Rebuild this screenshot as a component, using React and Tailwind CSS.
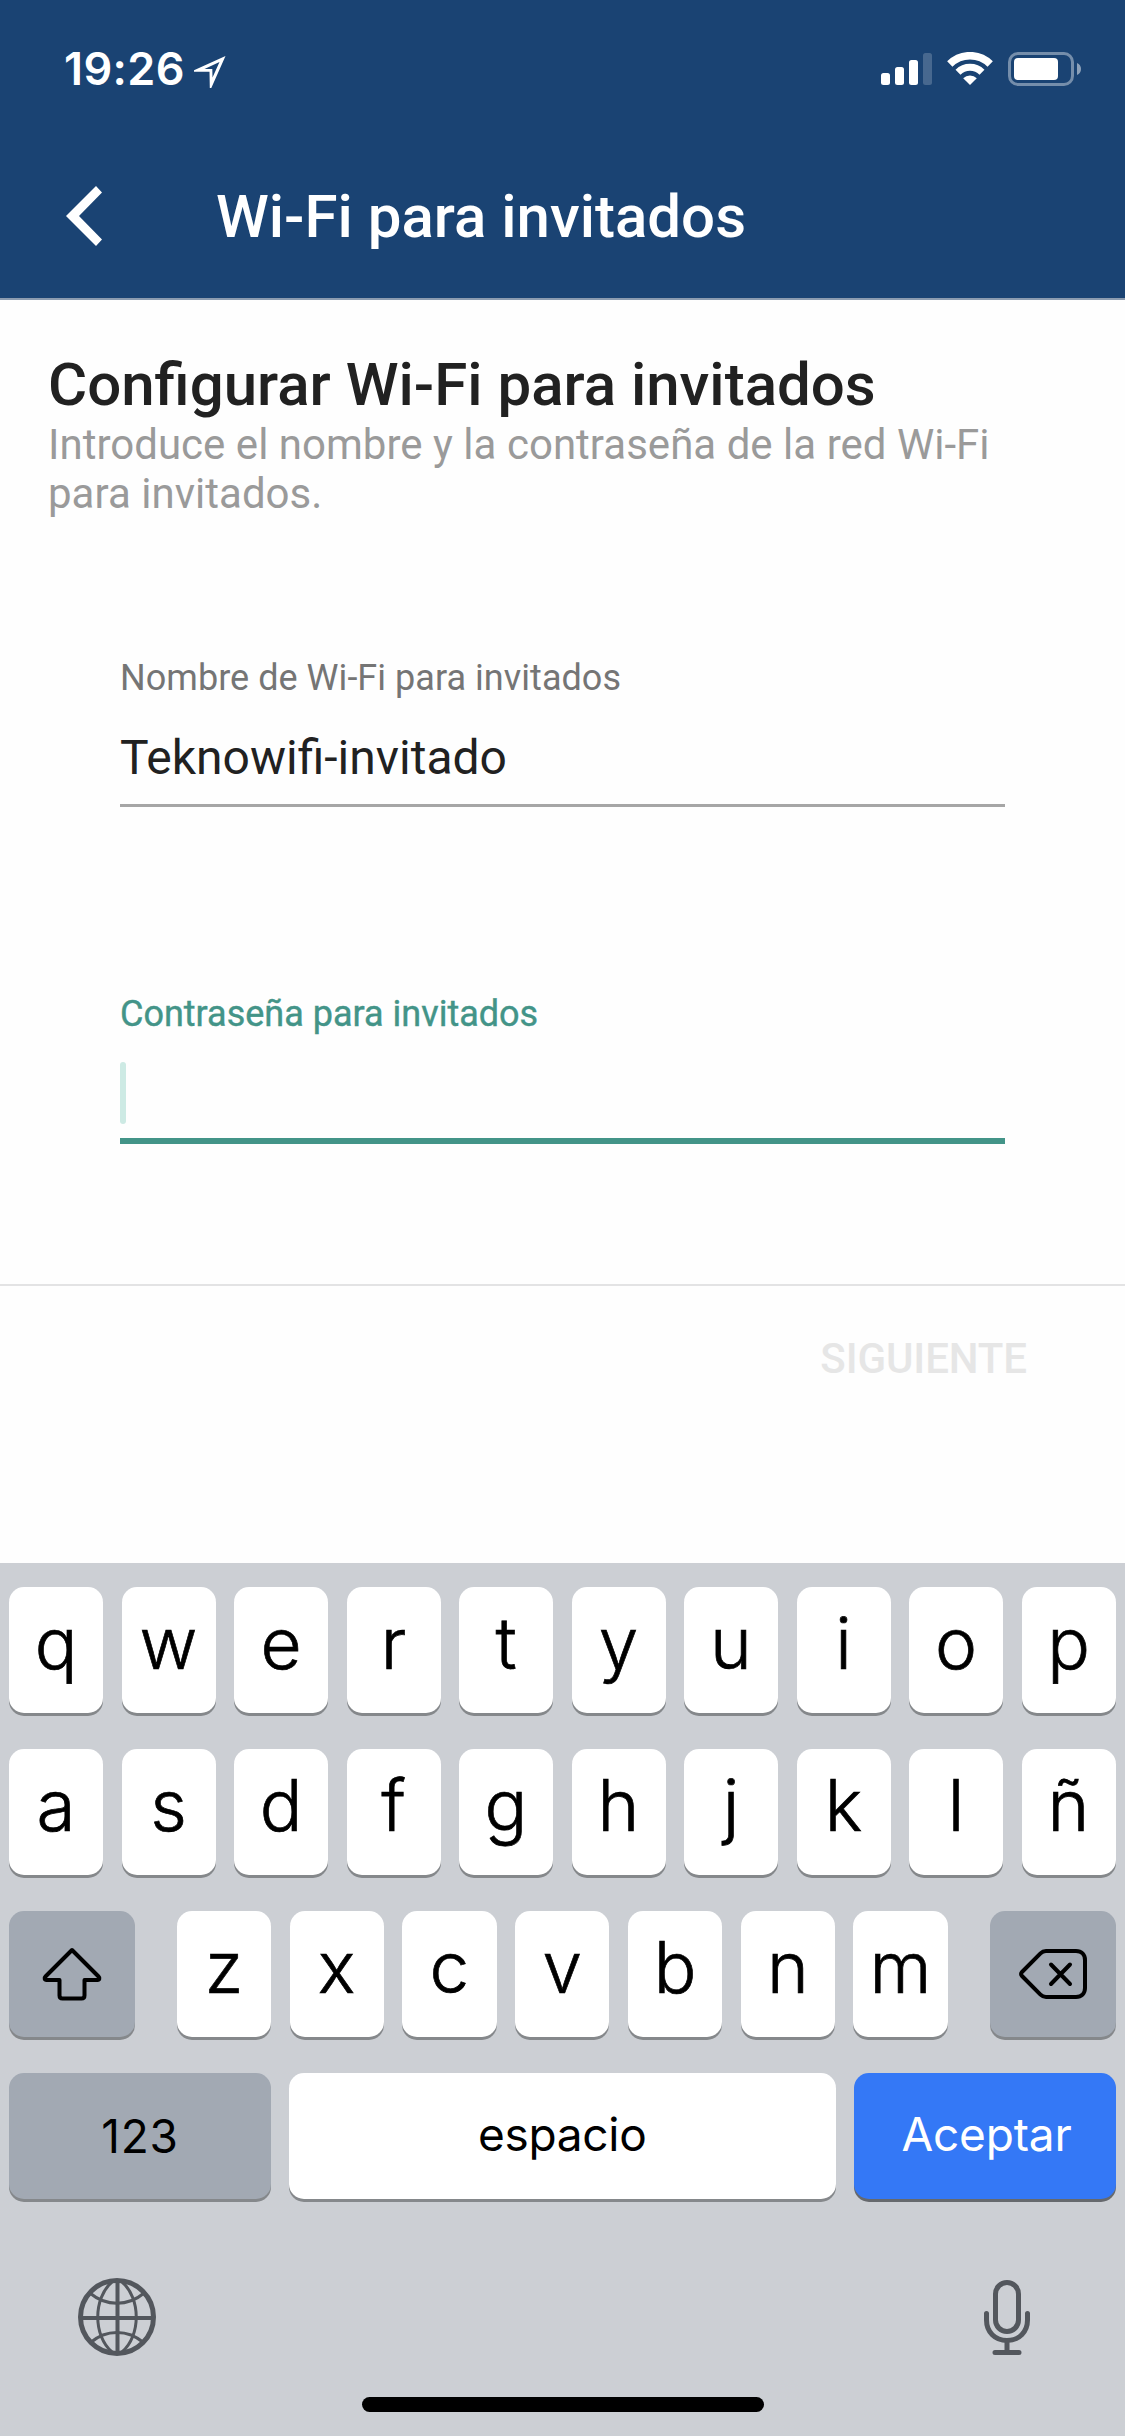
const rows = {
	first: ["q", "w", "e", "r", "t", "y", "u", "i", "o", "p"],
	second: ["a", "s", "d", "f", "g", "h", "j", "k", "l", "ñ"],
	third: ["z", "x", "c", "v", "b", "n", "m"],
};

const StatusBar = () => (
	<div className="h-[132px] flex items-start justify-between pl-16 pr-[44px] text-white">
		<div className="flex items-start">
			<p className={styles.time}>19:26</p>
			<svg className="mt-[56px]" width="32" height="33" viewBox="0 0 32 33" fill="currentColor" fillRule="evenodd">
				<path d="M31.500 0L0 14.200V15.800H15.500L15.800 32H17.300ZM25.500 6L18.500 21.500L18.300 12.900H10.500Z" />
			</svg>
		</div>

		<div className="flex items-start pt-[52px]">
			<svg width="52" height="34" viewBox="0 0 52 34" fill="currentColor">
				<rect x="0" y="21" width="9" height="12" rx="2.500" />
				<rect x="14" y="15" width="9" height="18" rx="2.500" />
				<rect x="28" y="8" width="9" height="25" rx="2.500" />
				<rect x="42" y="1" width="9" height="32" rx="2.500" opacity="0.200" />
			</svg>
			<svg className="ml-[14px]" width="46" height="34" viewBox="0 0 46 34" fill="none" stroke="currentColor">
				<path d="M2.800 12A28.600 28.600 0 0 1 43.200 12" strokeWidth="7.500" />
				<path d="M11 20.300A17 17 0 0 1 35 20.300" strokeWidth="7" />
				<path d="M16.200 26.300A9.600 9.600 0 0 1 29.800 26.300L23 33Z" fill="currentColor" stroke="none" />
			</svg>
			<svg className="ml-[15px]" width="73" height="34" viewBox="0 0 73 34" fill="none">
				<rect x="1.500" y="1.500" width="63" height="31" rx="8.500" stroke="currentColor" strokeWidth="3" opacity="0.400" />
				<rect x="6" y="6" width="44" height="22" rx="4" fill="currentColor" />
				<path d="M69 11C71.500 12 73 14.300 73 17S71.500 22 69 23Z" fill="currentColor" opacity="0.500" />
			</svg>
		</div>
	</div>
);

const Key = ({ label }) => <button className={styles.key}>{label}</button>;

const Keyboard = () => (
	<div className={styles.keyboard}>
		<div className="grid grid-cols-10 gap-[18.5px]">
			{rows.first.map((letter) => (
				<Key label={letter} key={letter} />
			))}
		</div>
		<div className="grid grid-cols-10 gap-[18.5px]">
			{rows.second.map((letter) => (
				<Key label={letter} key={letter} />
			))}
		</div>
		<div className="flex justify-between">
			<button className={styles.key_dark}>
				<svg width="60" height="54" viewBox="0 0 60 54" fill="none" stroke="#000" strokeWidth="4" strokeLinejoin="round">
					<path d="M30 3L3.500 29.500C2 31 2.500 33 4.500 33H17.500V48.500C17.500 50.500 18.500 51.500 20.500 51.500H39.500C41.500 51.500 42.500 50.500 42.500 48.500V33H55.500C57.500 33 58 31 56.500 29.500Z" />
				</svg>
			</button>
			<div className="grid grid-cols-7 gap-[18.5px] w-[771px]">
				{rows.third.map((letter) => (
					<Key label={letter} key={letter} />
				))}
			</div>
			<button className={styles.key_dark}>
				<svg width="68" height="50" viewBox="0 0 68 50" fill="none" stroke="#000" strokeWidth="4" strokeLinecap="round" strokeLinejoin="round">
					<path d="M27 2H57C62.500 2 66 5.500 66 11V39C66 44.500 62.500 48 57 48H27C24.500 48 23 47.200 21.500 45.700L3 27C1.700 25.700 1.700 24.300 3 23L21.500 4.300C23 2.800 24.500 2 27 2Z" />
					<path d="M32 15.500L51 35M51 15.500L32 35" />
				</svg>
			</button>
		</div>
		<div className="flex justify-between">
			<button className={styles.key_numbers}>123</button>
			<button className={styles.key_space}>espacio</button>
			<button className={styles.key_accept}>Aceptar</button>
		</div>

		<div className="flex justify-between items-start pl-[69px] pr-[86px] pt-[43px] text-[#53575d]">
			<svg width="78" height="78" viewBox="0 0 78 78" fill="none" stroke="currentColor" strokeWidth="3.500">
				<circle cx="39" cy="39" r="36.500" strokeWidth="5" />
				<path d="M39.500 3V75M3 40H75" strokeWidth="4" />
				<path d="M34 4C15 20 15 58 34 74M44 4C63 20 63 58 44 74" strokeWidth="3" />
				<path d="M12.500 15.500C28 28.500 50 28.500 65.500 15.500M12.500 64.500C28 51 50 51 65.500 64.500" strokeWidth="3" />
			</svg>
			<svg className="mt-[2px]" width="46" height="76" viewBox="0 0 46 76" fill="none" stroke="currentColor" strokeWidth="5" strokeLinecap="round">
				<rect x="11.500" y="2.500" width="23" height="49" rx="11.500" />
				<path d="M2.500 33.500V40C2.500 52 11 60.500 23 60.500S43.500 52 43.500 40V33.500M23 61V72M11 72.500H35" />
			</svg>
		</div>
	</div>
);

const App = () => {
	return (
		<div className="relative flex flex-col w-[1125px] h-[2436px] overflow-hidden bg-[#fefefe] font-['Roboto',sans-serif]">
			<header className="h-[300px] bg-[#1a4373] border-b-2 border-[#8c9cb0]">
				<StatusBar />
				<div className="flex items-center h-[168px] pl-[66px] text-white">
					<svg width="36" height="60" viewBox="0 0 36 60" fill="currentColor">
						<path d="M30 0L36 6.500L13 30L36 53.500L30 60L0 30Z" />
					</svg>
					<h1 className={styles.nav_h1}>Wi-Fi para invitados</h1>
				</div>
			</header>

			<main className="h-[984px] pt-[55px]">
				<div className="px-12">
					<h2 className={styles.title}>Configurar Wi-Fi para invitados</h2>
					<p className={styles.subtitle}>Introduce el nombre y la contraseña de la red Wi-Fi para invitados.</p>
				</div>

				<div className="px-[120px] mt-[142px]">
					<p className={styles.label}>Nombre de Wi-Fi para invitados</p>
					<p className={styles.value}>Teknowifi-invitado</p>
				</div>
				<div className="px-[120px] mt-[189px]">
					<p className={styles.label_active}>Contraseña para invitados</p>
					<div className="mt-[30px] pb-[14px] border-b-[6px] border-[#439488]">
						<div className="w-[6px] h-[62px] rounded-sm bg-[#cdeae4]" />
					</div>
				</div>
			</main>

			<footer className="flex justify-end items-start h-[279px] border-t-2 border-[#e3e3e4] pt-[51px] pr-[98px]">
				<button className={styles.next}>SIGUIENTE</button>
			</footer>

			<Keyboard />

			{/* home indicator */}
			<div className="absolute bottom-6 left-[362px] w-[402px] h-[15px] rounded-full bg-black" />
		</div>
	);
};

const styles = {
	time: "w-[130px] mt-[46px] leading-[46px] text-[45px] font-[560] tracking-[0.4px] font-['Inter',sans-serif]",
	nav_h1: "mt-[2px] ml-[114px] leading-[60px] text-[60px] font-medium",
	title: "leading-[60px] text-[60px] font-medium text-[#212121]",
	subtitle: "mt-[5px] leading-[49px] text-[42px] tracking-[0.02px] text-[#9a9a9a]",
	label: "leading-[36px] text-[36px] tracking-[0.04px] text-[#757575]",
	value: "mt-[32px] pb-[16px] leading-[60px] text-[48px] text-[#212121] border-b-[3px] border-[#a6a6a6]",
	label_active: "leading-[36px] text-[36px] text-[#439488] [-webkit-text-stroke:0.4px_#439488]",
	next: "leading-[44px] text-[42px] font-medium tracking-[-0.1px] text-[#e6e6e6]",
	keyboard: "flex flex-col gap-9 h-[873px] bg-[#cccfd4] pl-[9px] pr-[9.5px] pt-6 font-['Inter',sans-serif] text-black",
	key: "h-[126px] pb-[13px] rounded-[15px] bg-white text-[71px] leading-[113px] font-light [-webkit-text-stroke:0.7px_black] text-center shadow-[0_3px_0_#85888b]",
	key_dark: "flex items-center justify-center w-[126px] h-[126px] rounded-[15px] bg-[#a2a9b3] shadow-[0_3px_0_#85888b]",
	key_numbers: "w-[262px] h-[126px] rounded-[15px] bg-[#a2a9b3] text-[46px] font-[370] tracking-[0.8px] shadow-[0_3px_0_#85888b]",
	key_space: "w-[547px] h-[126px] pb-[3px] rounded-[15px] bg-white text-[46px] tracking-[-0.3px] shadow-[0_3px_0_#85888b]",
	key_accept: "w-[262px] h-[126px] pb-[3px] pl-[4px] rounded-[15px] bg-[#3478f6] text-white text-[46px] font-[370] tracking-[-0.2px] shadow-[0_3px_0_#66696d]",
};

export default App;
